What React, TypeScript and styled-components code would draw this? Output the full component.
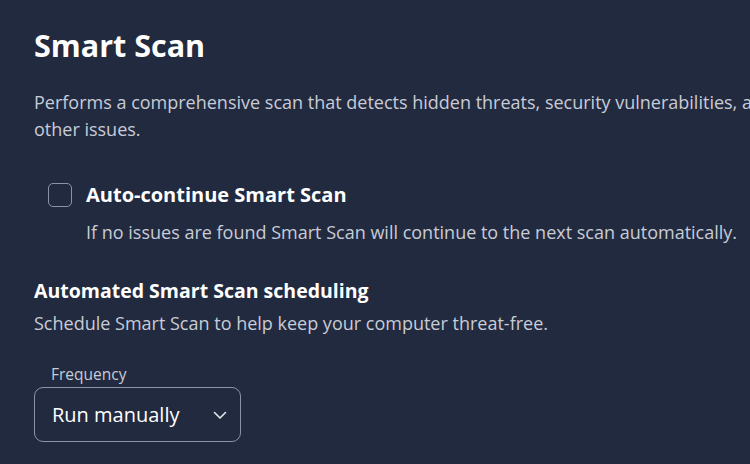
import React, { useState } from 'react';
import styled, { createGlobalStyle } from 'styled-components';

const GlobalStyle = createGlobalStyle`
  html, body {
    margin: 0;
    padding: 0;
    background: #222a40;
    overflow: hidden;
  }
  body {
    font-family: 'Open Sans', 'Noto Sans', sans-serif;
  }
`;

function App() {
  const [autoContinue, setAutoContinue] = useState(false);

  return (
    <Page>
      <GlobalStyle />
      <Title>Smart Scan</Title>
      <Description>
        Performs a comprehensive scan that detects hidden threats, security vulnerabilities, and
        other issues.
      </Description>

      <CheckRow>
        <CheckBox checked={autoContinue} onClick={() => setAutoContinue(!autoContinue)} />
        <CheckText>
          <CheckLabel>Auto-continue Smart Scan</CheckLabel>
          <CheckHint>If no issues are found Smart Scan will continue to the next scan automatically.</CheckHint>
        </CheckText>
      </CheckRow>

      <SectionTitle>Automated Smart Scan scheduling</SectionTitle>
      <SectionText>Schedule Smart Scan to help keep your computer threat-free.</SectionText>

      <Field>
        <FieldLabel>Frequency</FieldLabel>
        <Select>
          <span>Run manually</span>
          <svg width='16' height='16' viewBox='0 0 16 16' fill='none'>
            <path d='M2.5 5.5L8 11L13.5 5.5' stroke='#e6e8ee' strokeWidth='1.6' strokeLinecap='round' strokeLinejoin='round' />
          </svg>
        </Select>
      </Field>
    </Page>
  );
}

export default App;

const Page = styled.div`
  width: 900px;
  height: 464px;
  box-sizing: border-box;
  padding: 25px 0 0 34px;
  color: #ffffff;
  display: flex;
  flex-direction: column;
  align-items: flex-start;
`;

const Title = styled.h1`
  margin: 0;
  font-size: 30.5px;
  line-height: 40px;
  font-weight: 700;
  color: #ffffff;
`;

const Description = styled.p`
  margin: 24px 0 0 0;
  width: 760px;
  font-size: 18px;
  line-height: 27px;
  color: #c8ccd6;
`;

const CheckRow = styled.div`
  display: flex;
  align-items: flex-start;
  gap: 14px;
  margin: 40px 0 0 14px;
`;

const CheckBox = styled.div<{ checked: boolean }>`
  width: 24px;
  height: 24px;
  box-sizing: border-box;
  border: 1.5px solid #8d93a6;
  border-radius: 5px;
  background: ${(p) => (p.checked ? '#6e55e6' : 'transparent')};
  cursor: pointer;
  flex-shrink: 0;
`;

const CheckText = styled.div`
  display: flex;
  flex-direction: column;
`;

const CheckLabel = styled.span`
  font-size: 20px;
  line-height: 24px;
  font-weight: 700;
`;

const CheckHint = styled.span`
  margin-top: 13px;
  font-size: 18px;
  line-height: 24px;
  color: #c8ccd6;
`;

const SectionTitle = styled.h2`
  margin: 35px 0 0 0;
  font-size: 19.5px;
  line-height: 24px;
  font-weight: 700;
`;

const SectionText = styled.p`
  margin: 8px 0 0 0;
  font-size: 18px;
  line-height: 24px;
  color: #c8ccd6;
`;

const Field = styled.div`
  display: flex;
  flex-direction: column;
  margin-top: 29px;
`;

const FieldLabel = styled.span`
  margin-left: 17px;
  font-size: 15.5px;
  line-height: 20px;
  color: #c8ccd6;
`;

const Select = styled.div`
  margin-top: 3px;
  width: 207px;
  height: 55px;
  box-sizing: border-box;
  border: 1px solid #8d93a6;
  border-radius: 9px;
  padding: 0 12px 0 17px;
  display: flex;
  align-items: center;
  justify-content: space-between;
  font-size: 20px;
  color: #ffffff;
  cursor: pointer;
`;
